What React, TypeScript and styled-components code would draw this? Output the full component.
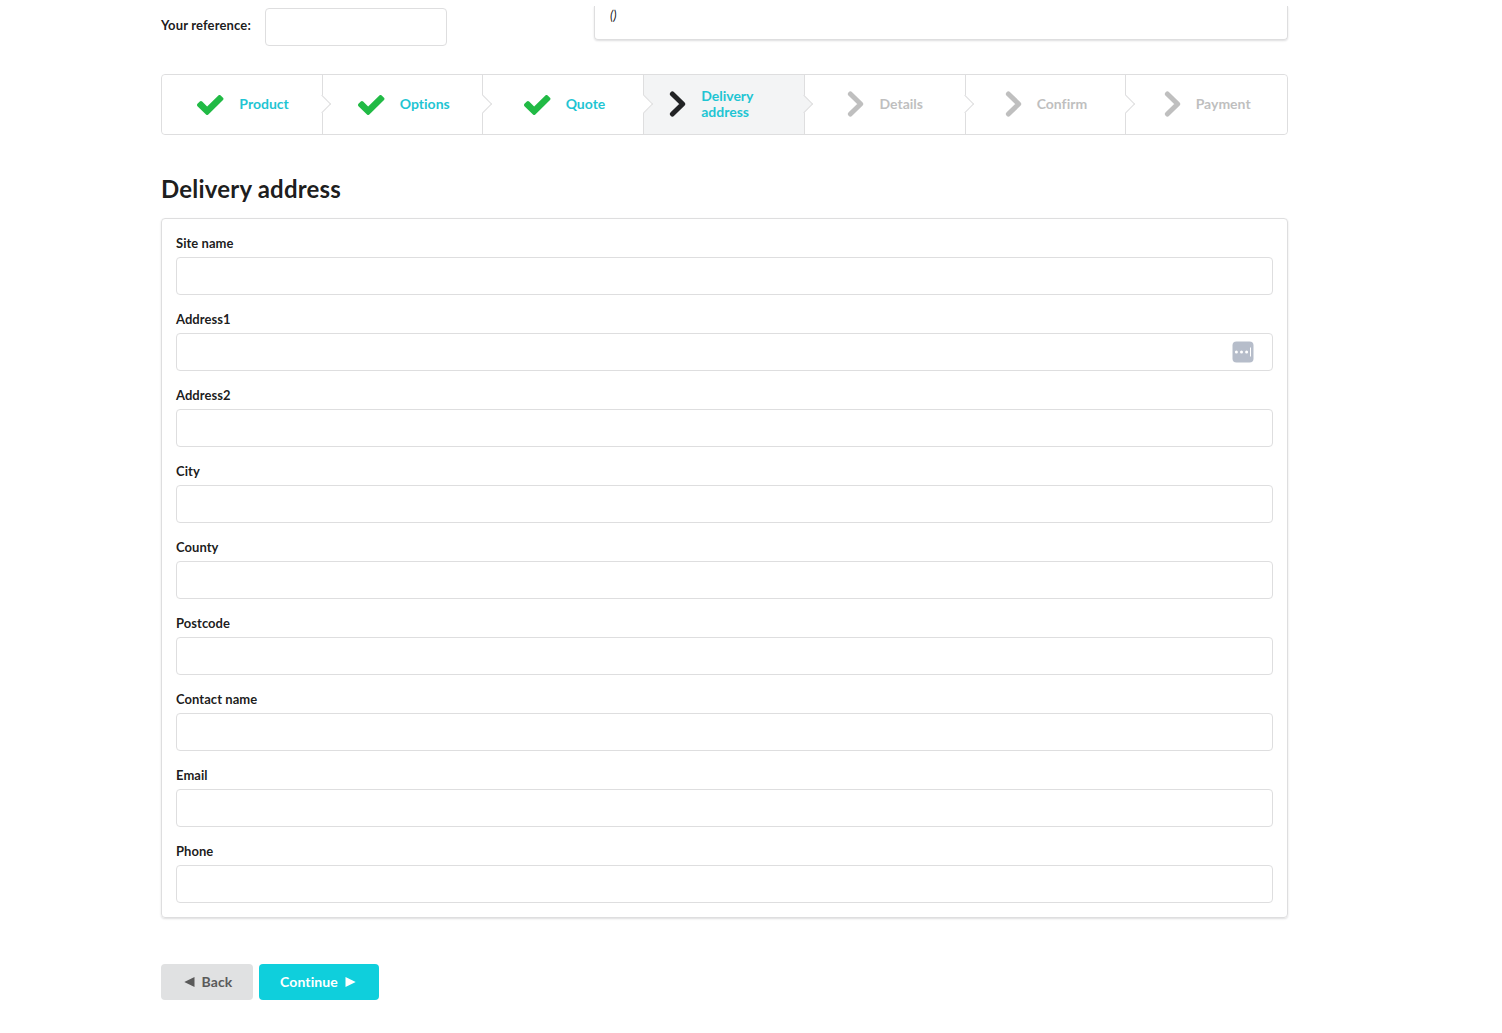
import React from "react";
import styled, { createGlobalStyle, css } from "styled-components";

const Global = createGlobalStyle`
  *, *::before, *::after { box-sizing: border-box; }
  body {
    margin: 0;
    background: #fff;
    color: rgba(0, 0, 0, 0.9);
    font: 14px/20px Lato, "Liberation Sans", sans-serif;
    font-variant-ligatures: none;
  }
`;

const Page = styled.main`
  width: 1127px;
  margin-left: 161px;
  padding-top: 6px;
`;

const TopRow = styled.div`
  display: flex;
  justify-content: space-between;
  align-items: flex-start;
`;

const Reference = styled.label`
  display: flex;
  align-items: center;
  width: 286px;
  margin-top: 2px;
`;

const ReferenceText = styled.span`
  flex: 0 0 104px;
  padding-bottom: 4px;
  font-size: 13px;
  font-weight: 700;
  letter-spacing: 0.14px;
`;

const Input = styled.input`
  display: block;
  width: 100%;
  min-width: 0;
  height: 38px;
  padding: 9px 14px;
  border: 1px solid #dededf;
  border-radius: 4px;
  background: #fff;
  font: inherit;
  outline: none;
`;

const panel = css`
  border: 1px solid #dededf;
  border-radius: 4px;
  box-shadow: 0 1px 2px 0 rgba(34, 36, 38, 0.15);
`;

const Summary = styled.section`
  ${panel}
  width: 694px;
  height: 34px;
  padding: 0 15px;
  border-top: 0;
  border-radius: 0 0 4px 4px;
  clip-path: inset(0 -4px -4px -4px);
  font-size: 13px;
  font-style: italic;
  line-height: 19px;
`;

const Steps = styled.nav`
  display: grid;
  grid-template-columns: repeat(7, 1fr);
  height: 61px;
  margin-top: 28px;
  border: 1px solid #dededf;
  border-radius: 4px;
`;

type State = "done" | "active" | "disabled";

const Step = styled.div<{ $state: State }>`
  position: relative;
  display: flex;
  align-items: center;
  justify-content: ${(p) => (p.$state === "active" ? "flex-start" : "center")};
  padding: 0 0 1px ${(p) => ({ done: 2.4, active: 25, disabled: 1 })[p.$state]}px;
  border-right: 1px solid #dededf;
  background: ${(p) => (p.$state === "active" ? "#f3f4f5" : "#fff")};

  &:first-child { border-radius: 4px 0 0 4px; }
  &:last-child { border-right: 0; border-radius: 0 4px 4px 0; }

  &:not(:last-child)::after {
    content: "";
    position: absolute;
    z-index: 1;
    top: calc(50% - 0.5px);
    right: -0.5px;
    width: 13px;
    height: 13px;
    border: solid #dededf;
    border-width: 0 1px 1px 0;
    background: inherit;
    transform: translate(50%, -50%) rotate(-45deg);
  }
`;

const StepTitle = styled.span<{ $state: State }>`
  width: ${(p) => (p.$state === "active" ? "80px" : "auto")};
  margin-left: 15px;
  color: ${(p) => (p.$state === "disabled" ? "#bfbfbf" : "#1fc5d3")};
  font-weight: 700;
  line-height: 16px;
`;

const StepSvg = styled.svg<{ $state: State }>`
  display: block;
  flex: none;
  margin-top: ${(p) => (p.$state === "done" ? 2 : 0)}px;
  color: ${(p) => ({ done: "#21ba45", active: "#222325", disabled: "#bfbfbf" })[p.$state]};
`;

const StepIcon = ({ state }: { state: State }) =>
  state === "done" ? (
    <StepSvg $state={state} width="27" height="20" viewBox="121 338 1580 1180" preserveAspectRatio="none">
      <path fill="currentColor" d="M1671 566q0 40-28 68l-724 724-136 136q-28 28-68 28t-68-28l-136-136-362-362q-28-28-28-68t28-68l136-136q28-28 68-28t68 28l294 295 656-657q28-28 68-28t68 28l136 136q28 28 28 68z" />
    </StepSvg>
  ) : (
    <StepSvg $state={state} width="17" height="26" viewBox="0 0 17 26" fill="none" stroke="currentColor" strokeLinecap="round" strokeLinejoin="round">
      <path d="M3.4 3L13.7 13L3.4 23" strokeWidth="5" />
    </StepSvg>
  );

const Heading = styled.h2`
  margin: 39px 0 14px;
  font-size: 24px;
  line-height: 30px;
  font-weight: 700;
  letter-spacing: 0.2px;
`;

const Form = styled.form`
  ${panel}
  display: grid;
  gap: 14px;
  padding: 14px;
`;

const Field = styled.label`
  display: grid;
  grid-template-rows: 20px 38px;
  gap: 4px;
`;

const FieldName = styled.span`
  font-size: 13px;
  font-weight: 700;
  letter-spacing: 0.05px;
`;

const InputWrap = styled.span`
  position: relative;
  display: block;
`;

const Autofill = styled.svg`
  position: absolute;
  top: 8px;
  right: 19px;
`;

const Actions = styled.div`
  display: flex;
  gap: 6px;
  margin-top: 46px;
`;

const Button = styled.button<{ $primary?: boolean }>`
  display: flex;
  align-items: center;
  justify-content: center;
  gap: 7px;
  width: ${(p) => (p.$primary ? 120 : 92)}px;
  height: 36px;
  padding: 0 ${(p) => (p.$primary ? 2 : 0)}px 0 ${(p) => (p.$primary ? 0 : 2)}px;
  border: 0;
  border-radius: 4px;
  background: ${(p) => (p.$primary ? "#0fcfdc" : "#e0e1e2")};
  color: ${(p) => (p.$primary ? "#fff" : "#5a5a5a")};
  font: 700 14px/14px Lato, "Liberation Sans", sans-serif;
  font-variant-ligatures: none;
  letter-spacing: 0.1px;
`;

const Triangle = styled.svg`
  width: 11px;
  height: 10px;
  fill: currentColor;
`;

const steps: { title: string; state: State }[] = [
  { title: "Product", state: "done" },
  { title: "Options", state: "done" },
  { title: "Quote", state: "done" },
  { title: "Delivery address", state: "active" },
  { title: "Details", state: "disabled" },
  { title: "Confirm", state: "disabled" },
  { title: "Payment", state: "disabled" },
];

const fields = ["Site name", "Address1", "Address2", "City", "County", "Postcode", "Contact name", "Email", "Phone"];

export default function App() {
  return (
    <>
      <Global />
      <Page>
        <TopRow>
          <Reference>
            <ReferenceText>Your reference:</ReferenceText>
            <Input />
          </Reference>
          <Summary>()</Summary>
        </TopRow>
        <Steps>
          {steps.map(({ title, state }) => (
            <Step key={title} $state={state}>
              <StepIcon state={state} />
              <StepTitle $state={state}>{title}</StepTitle>
            </Step>
          ))}
        </Steps>
        <Heading>Delivery address</Heading>
        <Form>
          {fields.map((name) => (
            <Field key={name}>
              <FieldName>{name}</FieldName>
              <InputWrap>
                <Input />
                {name === "Address1" && (
                  <Autofill width="22" height="22" viewBox="0 0 22 22">
                    <rect x="0.5" y="0.5" width="21" height="21" rx="4" fill="#b6bdca" />
                    <g fill="#fff">
                      <circle cx="4.4" cy="11" r="1.5" />
                      <circle cx="9.5" cy="11" r="1.5" />
                      <circle cx="14.6" cy="11" r="1.5" />
                      <rect x="18" y="6.5" width="1" height="9" />
                    </g>
                  </Autofill>
                )}
              </InputWrap>
            </Field>
          ))}
        </Form>
        <Actions>
          <Button type="button">
            <Triangle viewBox="0 0 11 10"><path d="M0.3 5L10.5 0V10Z" /></Triangle>
            Back
          </Button>
          <Button type="button" $primary>
            Continue
            <Triangle viewBox="0 0 11 10"><path d="M10.7 5L0.5 0V10Z" /></Triangle>
          </Button>
        </Actions>
      </Page>
    </>
  );
}
